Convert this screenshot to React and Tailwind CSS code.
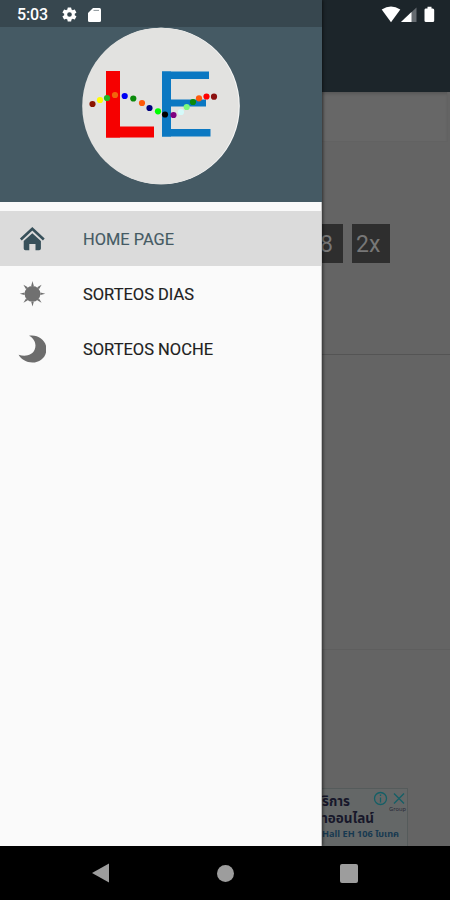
const beads = [
  [17.5, 84, '#8b1500'], [25, 80, '#ffff00'], [32, 78, '#22b522'], [40, 75, '#f2640c'],
  [49.7, 76, '#0000f5'], [58.3, 78.5, '#0a8a0a'], [67, 83, '#ff5a0a'], [74.5, 88, '#000080'],
  [83, 91.3, '#00ff00'], [90, 94.5, '#000000'], [98.5, 95, '#800080'], [106, 92, '#d4fafa'],
  [111.7, 87, '#7dfa7d'], [118, 82, '#0a8a0a'], [124, 78.3, '#ff5a0a'], [131.5, 76.5, '#ff0000'],
  [139, 76.7, '#8b1010'],
];

function Logo() {
  return (
    <svg className="h-[158px] w-[158px] shrink-0" viewBox="7 7 158 158">
      <circle cx="86.500" cy="86" r="78.300" fill="#fbfbfb" />
      <circle cx="85.500" cy="86" r="78.300" fill="#e2e2e0" />
      <rect x="31" y="51" width="14" height="66.5" fill="#f60000" />
      <rect x="31" y="106.5" width="48" height="11" fill="#f60000" />
      <rect x="87" y="51.5" width="9" height="65" fill="#0b78c2" />
      <rect x="87" y="51.5" width="47" height="7.5" fill="#0b78c2" />
      <rect x="87" y="79.5" width="44" height="7" fill="#0b78c2" />
      <rect x="87" y="109" width="48.5" height="7.5" fill="#0b78c2" />
      {beads.map(([x, y, c]) => (
        <circle key={x} cx={x} cy={y} r="3.1" fill={c} />
      ))}
    </svg>
  );
}

function HomeIcon() {
  return (
    <svg className="h-7 w-7" viewBox="0 0 28 28">
      <path d="M2.8 14.500 14.3 3.700 25.8 14.500" fill="none" stroke="#37505a" strokeWidth="2.6" />
      <path d="M14.3 8.3 22.900 16V23.500q0 1.8-1.8 1.8H17.500v-6.2h-6.2v6.2H7.500Q5.700 25.300 5.700 23.500v-7.500z" fill="#37505a" />
    </svg>
  );
}

function SunIcon() {
  return (
    <svg className="h-7 w-7" viewBox="0 0 28 28" fill="#707070">
      <circle cx="14.5" cy="13.800" r="7.9" />
      {[0, 45, 90, 135, 180, 225, 270, 315].map((a) => (
        <path key={a} d="M13.200 5.900 14.5 1 15.800 5.900z" transform={`rotate(${a} 14.5 13.800)`} />
      ))}
    </svg>
  );
}

function MoonIcon() {
  return (
    <svg className="h-7 w-7" viewBox="0 0 28 28">
      <path d="M11 .7C20.500-.8 28.4 5.500 28.4 14 28.4 22 22.3 27.500 14.4 27.500 8.4 27.500 3.2 24.500 .6 19.800 8 22 14.500 20 16.700 14.500 18.800 9 16.500 3.500 11 .7z" fill="#6d6d6d" />
    </svg>
  );
}

const items = [
  { label: 'HOME PAGE', Icon: HomeIcon, width: 91, active: true },
  { label: 'SORTEOS DIAS', Icon: SunIcon, width: 111 },
  { label: 'SORTEOS NOCHE', Icon: MoonIcon, width: 130 },
];

function StatusBar() {
  return (
    <div className="absolute inset-x-0 top-0 flex h-7 items-center pl-[17px] pr-[15px] text-white">
      <span className="w-[44px] pt-[2px] text-[16px] font-medium leading-7 tracking-[-0.1px]">5:03</span>
      <svg className="h-[17px] w-[17px]" viewBox="0 0 24 24" fill="#fff">
        <path d="M19.4 13a7.5 7.5 0 0 0 0-2l2.1-1.6a.5.5 0 0 0 .1-.7l-2-3.400a.5.500 0 0 0-.6-.2l-2.500 1a7.300 7.300 0 0 0-1.700-1l-.4-2.600a.5.500 0 0 0-.5-.5h-4a.5.500 0 0 0-.5.500L9 5.100a7.700 7.700 0 0 0-1.700 1l-2.500-1a.5.500 0 0 0-.6.200l-2 3.400a.5.500 0 0 0 .1.700L4.500 11a8 8 0 0 0 0 2l-2.200 1.600a.5.500 0 0 0-.1.700l2 3.400c.1.200.4.300.6.200l2.500-1a7.300 7.300 0 0 0 1.700 1l.4 2.600c0 .3.200.5.500.5h4c.3 0 .5-.2.500-.5l.4-2.600a7.700 7.700 0 0 0 1.700-1l2.500 1c.2.100.5 0 .6-.2l2-3.400a.5.500 0 0 0-.1-.7zM12 15.300a3.300 3.300 0 1 1 0-6.600 3.300 3.300 0 0 1 0 6.600z" />
      </svg>
      <svg className="ml-[10px] mt-px h-[14px] w-[13px]" viewBox="0 0 13 14">
        <path d="M5 0h6.500Q13 0 13 1.500v11Q13 14 11.500 14h-10Q0 14 0 12.500V5z" fill="#fff" />
        <path d="M5.500 2.400h5.500" stroke="#8b9499" strokeWidth="1" />
      </svg>
      <svg className="ml-auto h-[17px] w-[54px]" viewBox="0 0 54 17">
        <path d="M.7 3.500Q10-2.300 19.300 3.500L10 16.300z" fill="#fff" />
        <path d="M20 16 35.500 1.500V16z" fill="#656b70" />
        <path d="M20 16 30.500 6v10z" fill="#fff" />
        <path d="M44.500 2.500H46.500V.8h4V2.500h1.200q1.500 0 1.500 1.500v10.700Q53.200 16 51.800 16h-6.800Q43.500 16 43.500 14.700V4Q43.500 2.500 44.500 2.500z" fill="#fff" />
      </svg>
    </div>
  );
}

function Drawer() {
  return (
    <aside className="z-10 flex w-[322px] shrink-0 flex-col border-r border-[#c4c4c4] bg-[#fafafa] shadow-[1px_0_3px_rgba(0,0,0,0.55)]">
      <div className="-mr-px h-[27px] shrink-0 bg-[#37474f]" />
      <div className="-mr-px flex h-[175px] shrink-0 justify-center bg-[#455a64]">
        <Logo />
      </div>
      <nav className="pt-[9px]">
        {items.map(({ label, Icon, width, active }) => (
          <div key={label} className={`flex h-[55px] items-center pl-[18px] ${active ? 'bg-[#dbdbdb] text-[#455a64]' : 'text-[#202020]'}`}>
            <Icon />
            <svg className="ml-[37px] h-6 w-[140px]" fill="currentColor">
              <text x="0" y="17.500" fontSize="16" fontWeight="400" stroke="currentColor" strokeWidth="0.15" textLength={width} lengthAdjust="spacingAndGlyphs">{label}</text>
            </svg>
          </div>
        ))}
      </nav>
    </aside>
  );
}

function Advert() {
  return (
    <div className="mt-[138px] flex h-[58px] w-[86px] overflow-hidden border-r border-t border-[#555b5b] bg-[#646767]">
      <svg className="h-[57px] w-[86px] shrink-0" viewBox="0 0 86 57" fontFamily="'Noto Sans Thai', 'Noto Sans', sans-serif">
        <g fill="#17172a" fontWeight="700">
          <text x="0" y="17" fontSize="13.500" textLength="28" lengthAdjust="spacingAndGlyphs">ริการ</text>
          <text x="0" y="33.500" fontSize="13.500" textLength="52" lengthAdjust="spacingAndGlyphs">าออนไลน์</text>
        </g>
        <text x="0" y="48" fontSize="9" fontWeight="700" fill="#173950" textLength="77" lengthAdjust="spacingAndGlyphs">Hall EH 106 ไบเทค</text>
        <g fill="none" stroke="#145f66" strokeWidth="1.300">
          <circle cx="58.500" cy="9.500" r="6" />
          <path d="M58.500 8.500v5M58.500 5.500v1.500M72 4.500l10 10M82 4.500l-10 10" />
        </g>
        <text x="67" y="22" fontSize="6" fill="#292938" textLength="17" lengthAdjust="spacingAndGlyphs">Group</text>
      </svg>
    </div>
  );
}

function Page() {
  return (
    <main className="flex min-w-0 flex-1 flex-col bg-[#646464]">
      <div className="h-[92px] shrink-0 bg-[#1c252a]" />
      <div className="mr-[2px] h-[50px] shrink-0 border-b border-r border-[#626262] bg-[#676767] shadow-[inset_0_3px_3px_-1px_#585858]" />
      <div className="flex h-[213px] items-start gap-[9px] border-b border-[#545454] pt-[82px] text-[23px] text-[#777777]">
        <div className="flex h-[39px] w-[21px] items-center justify-end bg-[#2e2e2e] pr-[10px] pt-[4px]">8</div>
        <div className="flex h-[39px] w-[38px] items-center bg-[#2e2e2e] pl-[4px] pt-[4px]">2x</div>
      </div>
      <div className="h-[295px] border-b border-[#5e5e5e]" />
      <Advert />
    </main>
  );
}

function NavBar() {
  return (
    <footer className="flex h-[54px] shrink-0 items-center bg-black pl-[92px]">
      <svg className="h-5 w-[17px]" viewBox="0 0 17 20"><path d="M0 10 17 .5v19z" fill="#9d9d9d" /></svg>
      <div className="ml-[108px] h-[17px] w-[17px] rounded-full bg-[#9d9d9d]" />
      <div className="ml-[106px] h-[19px] w-[18px] rounded-[2px] bg-[#9d9d9d]" />
    </footer>
  );
}

export default function App() {
  return (
    <div className="relative flex h-[900px] w-[450px] flex-col overflow-hidden bg-black font-['Roboto',sans-serif]">
      <div className="flex h-[846px] shrink-0 overflow-hidden">
        <Drawer />
        <Page />
      </div>
      <NavBar />
      <div className="relative z-20 -mt-[900px] h-7 shrink-0">
        <StatusBar />
      </div>
    </div>
  );
}
